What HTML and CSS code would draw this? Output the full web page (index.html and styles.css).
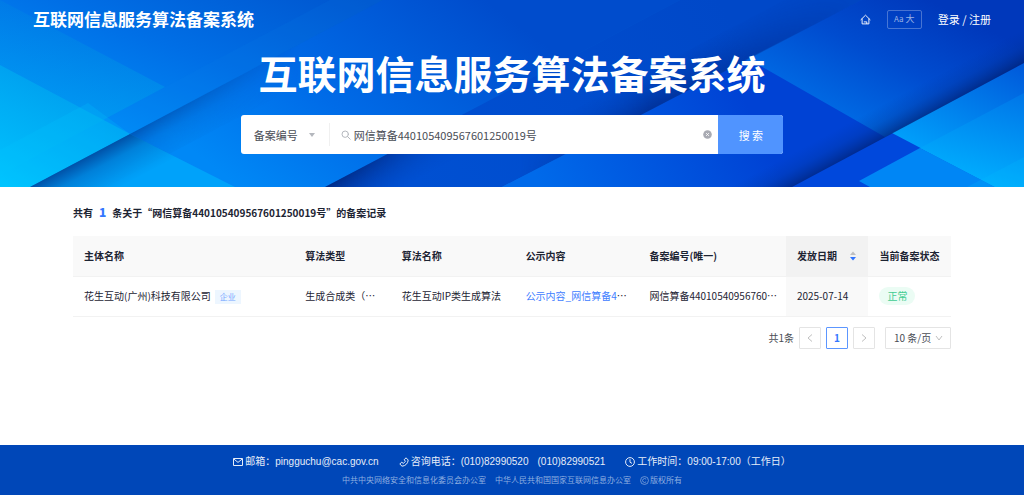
FILE: index.html
```html
<!DOCTYPE html>
<html lang="zh-CN">
<head>
<meta charset="utf-8">
<meta name="viewport" content="width=device-width, initial-scale=1">
<title>互联网信息服务算法备案系统</title>
<link rel="stylesheet" href="styles.css">
</head>
<body>
<header class="hero">
  <svg class="hero-art" viewBox="0 0 1024 187" preserveAspectRatio="none" aria-hidden="true">
    <defs>
      <linearGradient id="base" gradientUnits="userSpaceOnUse" x1="200" y1="187" x2="290" y2="-30">
        <stop offset="0" stop-color="#0090fa"/><stop offset="0.5" stop-color="#006fe6"/><stop offset="1" stop-color="#0056cf"/>
      </linearGradient>
      <linearGradient id="cyan" gradientUnits="userSpaceOnUse" x1="20" y1="195" x2="90" y2="60">
        <stop offset="0" stop-color="#00c4ff"/><stop offset="1" stop-color="#00a0ea" stop-opacity="0.55"/>
      </linearGradient>
      <linearGradient id="wedge" gradientUnits="userSpaceOnUse" x1="60" y1="0" x2="60" y2="175">
        <stop offset="0" stop-color="#00a0d8" stop-opacity="0.12"/><stop offset="1" stop-color="#00b4f4" stop-opacity="0.5"/>
      </linearGradient>
      <linearGradient id="band1" gradientUnits="userSpaceOnUse" x1="240" y1="187" x2="420" y2="-50">
        <stop offset="0" stop-color="#0088f6"/><stop offset="0.4" stop-color="#006ce8"/><stop offset="1" stop-color="#004ccc"/>
      </linearGradient>
      <linearGradient id="band2" gradientUnits="userSpaceOnUse" x1="420" y1="187" x2="720" y2="0">
        <stop offset="0" stop-color="#0050d2"/><stop offset="1" stop-color="#0048c8"/>
      </linearGradient>
      <linearGradient id="band3" gradientUnits="userSpaceOnUse" x1="540" y1="187" x2="740" y2="90">
        <stop offset="0" stop-color="#006aea"/><stop offset="1" stop-color="#0042d4"/>
      </linearGradient>
      <linearGradient id="upper" gradientUnits="userSpaceOnUse" x1="865" y1="130" x2="930" y2="0">
        <stop offset="0" stop-color="#006ae4"/><stop offset="0.5" stop-color="#004ccf"/><stop offset="1" stop-color="#0038bb"/>
      </linearGradient>
      <linearGradient id="right" gradientUnits="userSpaceOnUse" x1="960" y1="187" x2="1024" y2="63">
        <stop offset="0" stop-color="#00a8ff"/><stop offset="1" stop-color="#0058da"/>
      </linearGradient>
      <linearGradient id="corner" gradientUnits="userSpaceOnUse" x1="980" y1="187" x2="1010" y2="80">
        <stop offset="0" stop-color="#00b0ff"/><stop offset="1" stop-color="#0070e6"/>
      </linearGradient>
      <linearGradient id="shade1" gradientUnits="userSpaceOnUse" x1="130" y1="134" x2="150" y2="172">
        <stop offset="0" stop-color="#003088" stop-opacity="0.65"/><stop offset="0.35" stop-color="#003c9c" stop-opacity="0.28"/><stop offset="1" stop-color="#004cb0" stop-opacity="0"/>
      </linearGradient>
      <linearGradient id="shade2" gradientUnits="userSpaceOnUse" x1="387" y1="154" x2="404" y2="186">
        <stop offset="0" stop-color="#002274" stop-opacity="0.8"/><stop offset="1" stop-color="#003498" stop-opacity="0"/>
      </linearGradient>
      <linearGradient id="shade3" gradientUnits="userSpaceOnUse" x1="640" y1="114" x2="623" y2="82">
        <stop offset="0" stop-color="#002480" stop-opacity="0.6"/><stop offset="1" stop-color="#0034a0" stop-opacity="0"/>
      </linearGradient>
      <linearGradient id="shade4" gradientUnits="userSpaceOnUse" x1="892" y1="133" x2="878" y2="107">
        <stop offset="0" stop-color="#002070" stop-opacity="0.65"/><stop offset="0.5" stop-color="#003090" stop-opacity="0.25"/><stop offset="1" stop-color="#0034a0" stop-opacity="0"/>
      </linearGradient>
      <linearGradient id="fade1" gradientUnits="userSpaceOnUse" x1="100" y1="0" x2="300" y2="0">
        <stop offset="0" stop-color="#fff"/><stop offset="1" stop-color="#000"/>
      </linearGradient>
      <linearGradient id="fade2" gradientUnits="userSpaceOnUse" x1="330" y1="0" x2="470" y2="0">
        <stop offset="0" stop-color="#fff"/><stop offset="1" stop-color="#000"/>
      </linearGradient>
      <linearGradient id="fade3" gradientUnits="userSpaceOnUse" x1="520" y1="0" x2="850" y2="0">
        <stop offset="0" stop-color="#000"/><stop offset="0.4" stop-color="#fff"/><stop offset="1" stop-color="#222"/>
      </linearGradient>
      <mask id="mask1"><rect width="1024" height="187" fill="url(#fade1)"/></mask>
      <mask id="mask2"><rect width="1024" height="187" fill="url(#fade2)"/></mask>
      <mask id="mask3"><rect width="1024" height="187" fill="url(#fade3)"/></mask>
    </defs>
    <rect width="1024" height="187" fill="url(#base)"/>
    <path d="M30 187L383 0H680L325 187Z" fill="url(#band1)"/>
    <path d="M325 187L680 0H862L502 187Z" fill="url(#band2)"/>
    <path d="M502 187L862 0H1024V187Z" fill="url(#band3)"/>
    <path d="M0 0L165 87L0 175Z" fill="url(#wedge)"/>
    <path d="M210 63L330 0H383L105 147V119Z" fill="#0a8cf0" opacity="0.1"/>
    <g mask="url(#mask1)"><path d="M30 187L383 0H460L107 187Z" fill="url(#shade1)"/></g>
    <path d="M0 65L130 134L30 187H0Z" fill="url(#cyan)"/>
    <path d="M0 150L88 103L130 134L30 187H0Z" fill="#00c8ff" opacity="0.2"/>
    <path d="M130 134L235 187H30Z" fill="#00b0fc" opacity="0.65"/>
    <path d="M30 187L130 134L176 157L119 187Z" fill="url(#shade1)"/>
    <g mask="url(#mask2)"><path d="M325 187L680 0H760L402 187Z" fill="url(#shade2)"/></g>
    <path d="M745 60L862 0H1024V63L885 137L759 65Z" fill="url(#upper)"/>
    <g mask="url(#mask3)"><path d="M502 187L862 0H785L425 187Z" fill="url(#shade3)"/></g>
    <path d="M792 187L1024 63V187Z" fill="#0048dc"/>
    <path d="M892 133L1024 63V187H995Z" fill="url(#right)"/>
    <path d="M859 181L920 148L995 187H870Z" fill="#0086f5"/>
    <path d="M920 148L1024 93V187H995Z" fill="url(#corner)"/>
    <path d="M967 187L1024 157V187H995Z" fill="#00c0ff" opacity="0.2"/>
    <path d="M792 187L1024 63V26L723 187Z" fill="url(#shade4)"/>
  </svg>
  <nav class="topbar">
    <a class="brand" href="#">互联网信息服务算法备案系统</a>
    <div class="top-actions">
      <a class="home" href="#" aria-label="首页">
        <svg viewBox="0 0 12 12" width="11" height="11" fill="none" stroke="currentColor" stroke-linejoin="round" stroke-linecap="round"><path d="M1 6.2L6 1.3L11 6.2M2.3 5.4V10.8H9.7V5.4M4.6 8.6H7.4V10.5"/></svg>
      </a>
      <button class="font-size" type="button"><span class="small-a">Aa</span> 大</button>
      <a class="login" href="#">登录 / 注册</a>
    </div>
  </nav>
  <h1 class="title">互联网信息服务算法备案系统</h1>
  <form class="search">
    <div class="field-wrap">
      <select class="field" aria-label="搜索类型"><option>备案编号</option></select>
      <svg class="caret" viewBox="0 0 6 4" width="6" height="4" aria-hidden="true"><path d="M0 0H6L3 4Z" fill="currentColor"/></svg>
    </div>
    <label class="query-wrap">
      <svg viewBox="0 0 10 10" width="10" height="10" fill="none" stroke="#b4b7bd" stroke-linecap="round" aria-hidden="true"><circle cx="4.2" cy="4.2" r="3.2"/><path d="M6.6 6.6L9.2 9.2"/></svg>
      <input class="query" type="text" value="网信算备440105409567601250019号" aria-label="搜索内容">
      <button class="clear" type="button" aria-label="清除">
        <svg viewBox="0 0 9 9" width="9" height="9"><circle cx="4.5" cy="4.5" r="4.3" fill="#a9abb3"/><path d="M3.2 3.2L5.8 5.8M5.8 3.2L3.2 5.8" stroke="#fff"/></svg>
      </button>
    </label>
    <button class="submit" type="submit">搜 索</button>
  </form>
</header>

<main class="results">
  <h2 class="summary">共有<strong class="count">1</strong>条关于“网信算备440105409567601250019号”的备案记录</h2>
  <table class="records">
    <colgroup>
      <col class="c-owner"><col class="c-type"><col class="c-name"><col class="c-public"><col class="c-number"><col class="c-date"><col class="c-status">
    </colgroup>
    <thead>
      <tr>
        <th>主体名称</th><th>算法类型</th><th>算法名称</th><th>公示内容</th><th>备案编号(唯一)</th>
        <th class="sorted" aria-sort="descending"><div class="sort-head">发放日期
          <svg viewBox="0 0 6 10" width="6" height="10" aria-hidden="true"><path d="M0 4L3 0.5L6 4Z" fill="#bfbfbf"/><path d="M0 6L3 9.5L6 6Z" fill="#2f74ff"/></svg></div></th>
        <th>当前备案状态</th>
      </tr>
    </thead>
    <tbody>
      <tr>
        <td>花生互动(广州)科技有限公司<span class="tag">企业</span></td>
        <td>生成合成类（…</td>
        <td>花生互动IP类生成算法</td>
        <td><a class="doc" href="#">公示内容_网信算备4</a>…</td>
        <td>网信算备44010540956760…</td>
        <td class="sorted">2025-07-14</td>
        <td><span class="status">正常</span></td>
      </tr>
    </tbody>
  </table>
  <nav class="pager" aria-label="分页">
    <span class="total">共1条</span>
    <button class="page" type="button" disabled aria-label="上一页"><svg viewBox="0 0 6 10" width="6" height="10"><path d="M5 1.5L1 5L5 8.5" fill="none" stroke="currentColor"/></svg></button>
    <button class="page current" type="button" aria-current="page">1</button>
    <button class="page" type="button" disabled aria-label="下一页"><svg viewBox="0 0 6 10" width="6" height="10"><path d="M1 1.5L5 5L1 8.5" fill="none" stroke="currentColor"/></svg></button>
    <div class="size-wrap">
      <select class="size" aria-label="每页条数"><option>10 条/页</option></select>
      <svg class="chevron" viewBox="0 0 8 6" width="8" height="6" aria-hidden="true"><path d="M1 1L4 5L7 1" fill="none" stroke="currentColor"/></svg>
    </div>
  </nav>
</main>

<footer class="footer">
  <div class="contacts">
    <span class="contact"><svg viewBox="0 0 10 10" width="10" height="10" fill="none" stroke="currentColor"><path d="M0.5 1.5H9.5V8.5H0.5ZM0.8 2L5 5.4L9.2 2"/></svg>邮箱：pingguchu@cac.gov.cn</span>
    <span class="contact"><svg viewBox="0 0 10 10" width="10" height="10" fill="none" stroke="currentColor" stroke-linejoin="round"><path d="M7 0.8L9.2 3C9 6.4 6.4 9 3 9.2L0.8 7L2.8 5.2L4.2 6.4C5.2 6 6 5.2 6.4 4.2L5.2 2.8Z"/></svg>咨询电话：(010)82990520<span class="second">(010)82990521</span></span>
    <span class="contact"><svg viewBox="0 0 10 10" width="10" height="10" fill="none" stroke="currentColor"><circle cx="5" cy="5" r="4.4"/><path d="M5 2.2V5.2L7 6.4"/></svg>工作时间：09:00-17:00（工作日）</span>
  </div>
  <div class="legal">
    <span>中共中央网络安全和信息化委员会办公室</span>
    <span>中华人民共和国国家互联网信息办公室</span>
    <span class="rights"><svg viewBox="0 0 10 10" width="9" height="9" fill="none" stroke="currentColor" stroke-width="0.8"><circle cx="5" cy="5" r="4.4"/><path d="M6.8 3.6A2.2 2.2 0 1 0 6.8 6.4"/></svg>版权所有</span>
  </div>
</footer>
</body>
</html>
```
FILE: styles.css
```css
* { box-sizing: border-box; }

body {
  margin: 0;
  min-height: 100vh;
  display: flex;
  flex-direction: column;
  background: #fff;
  color: #1d2433;
  font: 10px/16px "Noto Sans CJK SC", "Noto Sans", sans-serif;
}

a { color: inherit; text-decoration: none; }
button, input, select { font: inherit; color: inherit; margin: 0; }
svg { display: block; flex: none; }

/* Hero */
.hero {
  position: relative;
  padding: 7px 33px 33px;
  color: #fff;
  overflow: hidden;
}
.hero-art {
  position: absolute;
  inset: 0;
  width: 100%;
  height: 100%;
}
.topbar {
  position: relative;
  display: flex;
  justify-content: space-between;
  align-items: center;
}
.brand { font-size: 17px; line-height: 24px; font-weight: 700; }
.top-actions { display: flex; align-items: center; gap: 16px; }
.font-size {
  width: 35px;
  height: 19px;
  padding: 0;
  border: 1px solid rgba(255, 255, 255, 0.28);
  border-radius: 2px;
  background: none;
  color: rgba(255, 255, 255, 0.6);
  font-size: 9px;
  line-height: 16px;
  white-space: nowrap;
}
.small-a { font-size: 8px; }
.login { font-size: 11px; }
.title {
  position: relative;
  margin: 12px 0 14px;
  font-size: 39px;
  line-height: 58px;
  font-weight: 700;
  text-align: center;
}
.search {
  position: relative;
  display: flex;
  width: 53vw;
  min-width: 420px;
  height: 39px;
  margin: 0 auto;
  border-radius: 3px;
  background: #fff;
  color: #4a4d55;
  font-size: 11px;
  overflow: hidden;
}
.field-wrap {
  display: flex;
  align-items: center;
  margin: 8px 0;
  padding: 0 14px 0 13px;
  border-right: 1px solid #f0f0f0;
  color: #b4b7bd;
}
.field {
  appearance: none;
  width: 55px;
  padding: 0;
  border: 0;
  background: none;
  color: #4a4d55;
}
.query-wrap {
  flex: 1;
  display: flex;
  align-items: center;
  gap: 3px;
  padding: 0 6px 0 11px;
}
.query {
  flex: 1;
  min-width: 0;
  padding: 0;
  border: 0;
  outline: 0;
  background: none;
}
.clear { padding: 0; border: 0; background: none; }
.submit {
  width: 65px;
  border: 0;
  background: #5094ff;
  color: #fff;
}

/* Results */
.results { flex: 1; padding: 17px 73px; }
.summary { margin: 0 0 15px; font-size: 10px; line-height: 16px; font-weight: 700; }
.count { margin: 0 6px; color: #3377ff; font-size: 12px; }
.records {
  width: 100%;
  table-layout: fixed;
  border-collapse: collapse;
}
.c-owner { width: 25.2%; }
.c-type { width: 11%; }
.c-name { width: 14.1%; }
.c-public { width: 14.1%; }
.c-number { width: 16.8%; }
.c-date { width: 9.4%; }
.c-status { width: 9.4%; }
.records th, .records td {
  height: 40px;
  padding: 0 0 0 11px;
  border-bottom: 1px solid #f2f2f2;
  text-align: left;
  white-space: nowrap;
}
.records th { background: #f9f9f9; font-weight: 700; }
.records th.sorted { background: #f2f2f2; }
.records td.sorted { background: #f9f9f9; }
.sort-head {
  display: flex;
  align-items: center;
  justify-content: space-between;
  padding-right: 12px;
}
.tag {
  margin-left: 4px;
  padding: 0 5px;
  display: inline-block;
  line-height: 14px;
  background: #edf6ff;
  color: #75a8ff;
  font-size: 8px;
}
.doc { color: #3f80ff; }
.status {
  display: inline-block;
  padding: 0 8px;
  border-radius: 9px;
  line-height: 18px;
  background: #ebfcf4;
  color: #41cc92;
}

/* Pager */
.pager {
  display: flex;
  justify-content: flex-end;
  align-items: center;
  gap: 5px;
  margin-top: 10px;
  color: #4a4d55;
}
.page {
  display: grid;
  place-items: center;
  width: 22px;
  height: 22px;
  padding: 0;
  border: 1px solid #e4e4e4;
  border-radius: 1px;
  background: #fff;
  color: #c0c0c0;
}
.page.current { border-color: #5c96ff; color: #3377ff; font-weight: 700; }
.size-wrap {
  display: flex;
  align-items: center;
  height: 22px;
  margin-left: 5px;
  padding: 0 7px 0 8px;
  border: 1px solid #e4e4e4;
  border-radius: 1px;
  color: #c0c0c0;
}
.size {
  appearance: none;
  width: 41px;
  padding: 0;
  border: 0;
  background: none;
  color: #4a4d55;
}

/* Footer */
.footer {
  padding: 8px 16px 7px;
  background: #0047b8;
  color: #e6edf8;
}
.contacts, .legal {
  display: flex;
  justify-content: center;
  align-items: center;
}
.contacts {
  gap: 20px;
  font-family: "Liberation Sans", "Noto Sans CJK SC", sans-serif;
  line-height: 17px;
}
.contact { display: flex; align-items: center; gap: 2px; }
.second { margin-left: 7px; }
.legal {
  gap: 9px;
  margin-top: 2px;
  color: #8eaee0;
  font-size: 8px;
}
.rights { display: flex; align-items: center; gap: 1px; }
```
